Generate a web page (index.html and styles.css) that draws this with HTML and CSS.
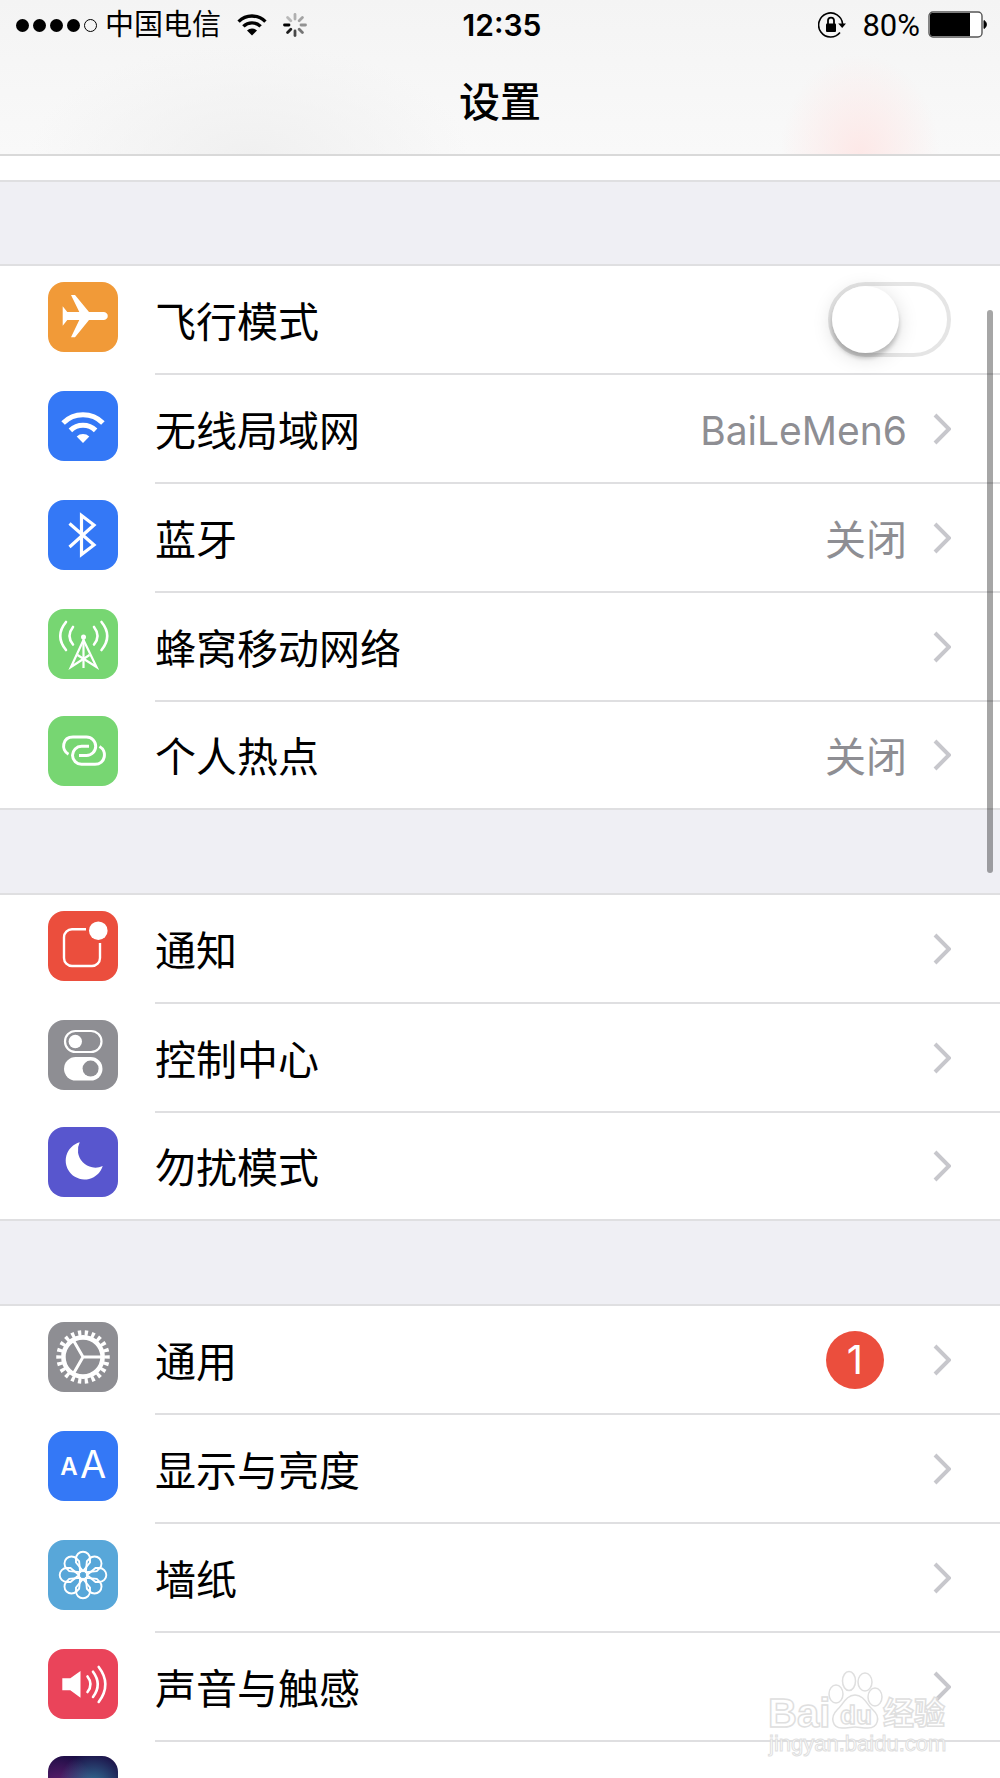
FILE: index.html
```
<!DOCTYPE html>
<html lang="zh-CN">
<head>
    <meta charset="UTF-8">
    <meta name="viewport" content="width=device-width, initial-scale=1.0">
    <title>设置</title>
    <link rel="stylesheet" href="styles.css">
</head>
<body>
    <svg class="sprite" aria-hidden="true">
        <symbol id="chevron" viewBox="0 0 18 32">
            <path d="M2 2 L16 16 L2 30" fill="none" stroke="currentColor" stroke-width="4"/>
        </symbol>
    </svg>

    <header class="header">
        <div class="status-bar">
            <div class="status-left">
                <div class="signal">
                    <span class="dot"></span>
                    <span class="dot"></span>
                    <span class="dot"></span>
                    <span class="dot"></span>
                    <span class="dot empty"></span>
                </div>
                <span class="carrier">中国电信</span>
                <svg class="wifi" width="30" height="22" viewBox="0 0 30 22">
                    <g fill="none" stroke="#000" stroke-width="3.4">
                        <path d="M1.6 7.6 A19 19 0 0 1 28.4 7.6"/>
                        <path d="M6.4 12.4 A12.2 12.2 0 0 1 23.6 12.4"/>
                    </g>
                    <path d="M15 21.5 L10 16.6 A7 7 0 0 1 20 16.6 Z"/>
                </svg>
                <svg width="24" height="24" viewBox="0 0 24 24" stroke="#000" stroke-width="2.8" stroke-linecap="round">
                    <path d="M12 1.5 V6" opacity=".28"/>
                    <path d="M19.4 4.6 L16.2 7.8" opacity=".33"/>
                    <path d="M22.5 12 H18" opacity=".4"/>
                    <path d="M19.4 19.4 L16.2 16.2" opacity=".52"/>
                    <path d="M12 22.5 V18" opacity=".7"/>
                    <path d="M4.6 19.4 L7.8 16.2" opacity=".88"/>
                    <path d="M1.5 12 H6"/>
                    <path d="M4.6 4.6 L7.8 7.8" opacity=".24"/>
                </svg>
            </div>
            <time class="clock">12:35</time>
            <div class="status-right">
                <svg width="28" height="28" viewBox="0 0 28 28">
                    <path d="M22 21.5 A12 12 0 1 1 24.6 13" fill="none" stroke="#000" stroke-width="1.6"/>
                    <path d="M20.2 12.5 H28 L24.2 17 Z"/>
                    <rect x="8" y="12.5" width="10" height="8.5" rx="1"/>
                    <path d="M10 13 V9.6 a3 3 0 0 1 6 0 V13" fill="none" stroke="#000" stroke-width="1.8"/>
                </svg>
                <span class="percent">80%</span>
                <svg width="60" height="28" viewBox="0 0 60 28">
                    <rect x="1" y="1" width="53" height="25" rx="4" fill="#fff" stroke="#555" stroke-width="1.4"/>
                    <path d="M4 2 H42 V25 H4 a2 2 0 0 1 -2 -2 V4 a2 2 0 0 1 2 -2 Z"/>
                    <path d="M56 9.5 a4.5 4.5 0 0 1 0 8 Z" stroke="#000"/>
                </svg>
            </div>
        </div>
        <h1>设置</h1>
    </header>

    <main class="settings">
        <div class="search-edge"></div>

        <div class="group">
            <div class="row">
                <svg class="icon orange" viewBox="0 0 70 70">
                    <path fill="#fff" d="M14.7 24.3 L19.3 30 H31.3 L23 13 H27 L41 30 H56 C61 30.5 61 37.5 56 38 H41 L27 55.3 H23 L31.3 38 H19.3 L14.7 43.7 Z"/>
                </svg>
                <div class="cell">
                    <label class="label" for="airplane">飞行模式</label>
                    <input class="switch" type="checkbox" id="airplane">
                </div>
            </div>
            <a class="row" href="#">
                <svg class="icon blue" viewBox="0 0 70 70">
                    <g fill="none" stroke="#fff" stroke-width="5">
                        <path d="M15.1 32 A28.2 28.2 0 0 1 54.9 32"/>
                        <path d="M22.4 39.4 A18 18 0 0 1 47.6 39.4"/>
                    </g>
                    <path fill="#fff" d="M35 52 L28.7 45.5 A9.5 9.5 0 0 1 41.3 45.5 Z"/>
                </svg>
                <div class="cell">
                    <span class="label">无线局域网</span>
                    <span class="value network">BaiLeMen6</span>
                    <svg class="chevron"><use href="#chevron"/></svg>
                </div>
            </a>
            <a class="row" href="#">
                <svg class="icon blue" viewBox="0 0 70 70">
                    <path fill="none" stroke="#fff" stroke-width="3.2" d="M21.5 23.5 L46 45 L33.5 54.5 V15.5 L46 25 L21.5 47"/>
                </svg>
                <div class="cell">
                    <span class="label">蓝牙</span>
                    <span class="value">关闭</span>
                    <svg class="chevron"><use href="#chevron"/></svg>
                </div>
            </a>
            <a class="row" href="#">
                <svg class="icon green" viewBox="0 0 70 70">
                    <circle cx="35.5" cy="28" r="2.5" fill="#fff"/>
                    <g fill="none" stroke="#fff" stroke-width="2.2">
                        <path d="M35.5 30 V59"/>
                        <path d="M35.5 31 L23 58 L41.5 46"/>
                        <path d="M35.5 31 L48.5 58 L29.5 46"/>
                    </g>
                    <g fill="none" stroke="#fff" stroke-width="2.6" stroke-linecap="round">
                        <path d="M25 18 Q18 27 25 35.5"/>
                        <path d="M18 13 Q6.5 27 18 41"/>
                        <path d="M46 18 Q53 27 46 35.5"/>
                        <path d="M53.5 13 Q65 27 53.5 41"/>
                    </g>
                </svg>
                <div class="cell">
                    <span class="label">蜂窝移动网络</span>
                    <svg class="chevron"><use href="#chevron"/></svg>
                </div>
            </a>
            <a class="row" href="#">
                <svg class="icon green" viewBox="0 0 70 70">
                    <g fill="none" stroke="#fff" stroke-width="3">
                        <path d="M20.5 38.3 C12.5 34 14.5 21 25 21 H38.5 A9.2 9.2 0 0 1 38.5 39.4 H31"/>
                        <path d="M41 30.3 H33.5 A9 9 0 0 0 33.5 48.3 H47 C57.5 48.3 59.5 35 51.5 30.5"/>
                    </g>
                </svg>
                <div class="cell">
                    <span class="label">个人热点</span>
                    <span class="value">关闭</span>
                    <svg class="chevron"><use href="#chevron"/></svg>
                </div>
            </a>
        </div>

        <div class="group">
            <a class="row" href="#">
                <svg class="icon red" viewBox="0 0 70 70">
                    <path fill="none" stroke="#fff" stroke-width="2.4" d="M38 18.2 H24 a8 8 0 0 0 -8 8 V47 a8 8 0 0 0 8 8 H44 a8 8 0 0 0 8 -8 V32"/>
                    <circle cx="50.3" cy="19.7" r="9.3" fill="#fff"/>
                </svg>
                <div class="cell">
                    <span class="label">通知</span>
                    <svg class="chevron"><use href="#chevron"/></svg>
                </div>
            </a>
            <a class="row" href="#">
                <svg class="icon gray" viewBox="0 0 70 70">
                    <rect x="17" y="11" width="36.5" height="21" rx="10.5" fill="none" stroke="#fff" stroke-width="2.2"/>
                    <circle cx="27.3" cy="21.5" r="6.7" fill="#fff"/>
                    <rect x="16" y="37" width="38.5" height="23.6" rx="11.8" fill="#fff"/>
                    <circle cx="42.6" cy="48.6" r="8" fill="#8e8e93"/>
                </svg>
                <div class="cell">
                    <span class="label">控制中心</span>
                    <svg class="chevron"><use href="#chevron"/></svg>
                </div>
            </a>
            <a class="row" href="#">
                <svg class="icon purple" viewBox="0 0 70 70">
                    <path fill="#fff" d="M31.7 15.3 A18.9 18.9 0 1 0 54.7 39 A17.5 17.5 0 0 1 31.7 15.3 Z"/>
                </svg>
                <div class="cell">
                    <span class="label">勿扰模式</span>
                    <svg class="chevron"><use href="#chevron"/></svg>
                </div>
            </a>
        </div>

        <div class="group">
            <a class="row" href="#">
                <svg class="icon gray" viewBox="0 0 70 70">
                    <g fill="none" stroke="#fff">
                        <circle cx="35" cy="35" r="24" stroke-width="5.5" pathLength="220" stroke-dasharray="4.8 5.2" stroke-dashoffset="2.4"/>
                        <circle cx="35" cy="35" r="19.6" stroke-width="4.6"/>
                        <path stroke-width="3" d="M35 35 H54 M35 35 L25.5 18.5 M35 35 L25.5 51.5"/>
                    </g>
                </svg>
                <div class="cell">
                    <span class="label">通用</span>
                    <span class="badge">1</span>
                    <svg class="chevron"><use href="#chevron"/></svg>
                </div>
            </a>
            <a class="row" href="#">
                <svg class="icon blue" viewBox="0 0 70 70">
                    <g class="letters" text-anchor="middle">
                        <text class="small-a" x="21" y="44">A</text>
                        <text class="big-a" x="45" y="47">A</text>
                    </g>
                </svg>
                <div class="cell">
                    <span class="label">显示与亮度</span>
                    <svg class="chevron"><use href="#chevron"/></svg>
                </div>
            </a>
            <a class="row" href="#">
                <svg class="icon sky" viewBox="0 0 70 70">
                    <defs>
                        <path id="petal" d="M35 31 L28 22.5 V18.7 a7 7 0 0 1 14 0 V22.5 Z"/>
                    </defs>
                    <g fill="none" stroke="#fff" stroke-width="1.9">
                        <circle cx="35" cy="35" r="4.2"/>
                        <use href="#petal"/>
                        <use href="#petal" transform="rotate(45 35 35)"/>
                        <use href="#petal" transform="rotate(90 35 35)"/>
                        <use href="#petal" transform="rotate(135 35 35)"/>
                        <use href="#petal" transform="rotate(180 35 35)"/>
                        <use href="#petal" transform="rotate(225 35 35)"/>
                        <use href="#petal" transform="rotate(270 35 35)"/>
                        <use href="#petal" transform="rotate(315 35 35)"/>
                    </g>
                </svg>
                <div class="cell">
                    <span class="label">墙纸</span>
                    <svg class="chevron"><use href="#chevron"/></svg>
                </div>
            </a>
            <a class="row" href="#">
                <svg class="icon pink" viewBox="0 0 70 70">
                    <path fill="#fff" d="M14.3 29.3 H22.3 L32.5 22 V48.7 L22.3 41.3 H14.3 Z"/>
                    <g fill="none" stroke="#fff" stroke-width="2.6" stroke-linecap="round">
                        <path d="M39.5 27.5 Q45.5 35.3 39.5 43"/>
                        <path d="M45 22.7 Q54.5 35.3 45 48"/>
                        <path d="M50.7 18 Q64 35.3 50.7 53"/>
                    </g>
                </svg>
                <div class="cell">
                    <span class="label">声音与触感</span>
                    <svg class="chevron"><use href="#chevron"/></svg>
                </div>
            </a>
            <a class="row" href="#">
                <span class="icon siri"></span>
                <div class="cell"></div>
            </a>
        </div>
    </main>

    <div class="scrollbar"></div>

    <svg class="watermark" width="184" height="90" viewBox="0 0 184 90">
        <g fill="#fff" stroke="#dcdcdc" stroke-width="1.5">
            <ellipse cx="70" cy="26" rx="7" ry="9"/>
            <ellipse cx="83" cy="13" rx="6.5" ry="9.5"/>
            <ellipse cx="99" cy="14" rx="7" ry="9"/>
            <ellipse cx="109" cy="29" rx="7" ry="9"/>
            <path d="M89 27 C98 27 101 37 107 42 C115 49 112 60 102 60 C96 60 93 59 89 59 C85 59 82 60 76 60 C66 60 64 49 71 42 C77 37 80 27 89 27 Z"/>
            <text class="wm-bai" x="2" y="59">Bai</text>
            <text class="wm-du" x="74" y="56">du</text>
            <text class="wm-cn" x="117" y="56">经验</text>
            <text class="wm-url" x="3" y="83">jingyan.baidu.com</text>
        </g>
    </svg>
</body>
</html>
```
FILE: styles.css
```
:root {
    --line-color: #dfdfe1;
    --page-color: #efeff4;
    --value-color: #8e8e93;
    --chevron-color: #c7c7cc;
}

* {
    margin: 0;
    padding: 0;
    box-sizing: border-box;
}

body {
    position: relative;
    height: 100vh;
    overflow: hidden;
    display: flex;
    flex-direction: column;
    background-color: var(--page-color);
    color: #000;
    font-family: Inter, "Noto Sans CJK SC", sans-serif;
}

a {
    color: inherit;
    text-decoration: none;
}

.sprite {
    display: none;
}

/* Header */
.header {
    flex-shrink: 0;
    height: 156px;
    border-bottom: 2px solid #d9d9d9;
    background:
        radial-gradient(ellipse 80px 100px at 86% 100%, #fde8e7, rgba(253, 232, 231, 0)),
        radial-gradient(ellipse 220px 110px at 25% 100%, #f0f0f0, rgba(240, 240, 240, 0)),
        linear-gradient(#f4f4f4, #f9f9f9);
}

.status-bar {
    display: grid;
    grid-template-columns: 1fr auto 1fr;
    align-items: center;
    height: 50px;
    padding: 0 12px 0 16px;
}

.status-left,
.status-right {
    display: flex;
    align-items: center;
}

.status-right {
    justify-content: flex-end;
}

.signal {
    display: flex;
    gap: 4px;
    margin-right: 8px;
}

.dot {
    width: 13px;
    height: 13px;
    border-radius: 50%;
    background-color: #000;
}

.dot.empty {
    background-color: transparent;
    border: 1px solid #000;
}

.carrier {
    font-size: 29px;
    line-height: 40px;
}

.wifi {
    margin: 0 16px;
}

.clock {
    font-size: 30px;
    font-weight: 600;
}

.percent {
    margin: 0 8px 0 16px;
    font-family: Roboto, sans-serif;
    font-size: 31px;
}

.header h1 {
    padding-top: 22px;
    font-size: 41px;
    font-weight: 500;
    line-height: 60px;
    text-align: center;
}

/* Settings list */
.settings {
    flex: 1;
    min-height: 0;
    overflow: hidden;
}

.search-edge {
    height: 26px;
    background-color: #fff;
    border-bottom: 2px solid var(--line-color);
}

.group {
    margin-top: 82px;
    background-color: #fff;
    border-top: 2px solid var(--line-color);
}

.row {
    display: flex;
    align-items: center;
    height: 109px;
    padding-left: 48px;
}

.group .row:last-child {
    height: 108px;
    border-bottom: 2px solid var(--line-color);
}

.group .row:last-child .cell {
    border-bottom: none;
}

.group + .group {
    margin-top: 83px;
}

.icon {
    flex-shrink: 0;
    width: 70px;
    height: 70px;
    margin-bottom: 8px;
    margin-right: 37px;
    border-radius: 16px;
}

.orange { background-color: #f19a38; }
.blue { background-color: #3478f6; }
.green { background-color: #77d672; }
.red { background-color: #eb4e3d; }
.gray { background-color: #8e8e93; }
.purple { background-color: #5856ce; }
.sky { background-color: #58a7d9; }
.pink { background-color: #ea445a; }

.siri {
    background:
        radial-gradient(circle at 65% 45%, rgba(60, 150, 180, 0.8), rgba(60, 150, 180, 0) 60%),
        radial-gradient(circle at 15% 50%, rgba(130, 40, 130, 0.8), rgba(130, 40, 130, 0) 55%),
        #1b0d45;
}

.cell {
    flex: 1;
    display: flex;
    align-items: center;
    height: 100%;
    padding-right: 49px;
    border-bottom: 2px solid var(--line-color);
}

.label,
.value {
    padding-top: 4px;
    font-size: 41px;
    line-height: 60px;
}

.label {
    flex: 1;
}

.value {
    color: var(--value-color);
}

.value.network {
    font-size: 39px;
}

.chevron {
    width: 18px;
    height: 32px;
    margin-left: 26px;
    color: var(--chevron-color);
}

.badge {
    width: 58px;
    height: 58px;
    margin-right: 23px;
    border-radius: 50%;
    background-color: #eb4e3d;
    color: #fff;
    font-size: 40px;
    line-height: 58px;
    text-align: center;
}

.switch {
    appearance: none;
    width: 123px;
    height: 75px;
    border: 4px solid #e5e5e5;
    border-radius: 38px;
    background-color: #fff;
    cursor: pointer;
}

.switch::before {
    content: "";
    display: block;
    width: 67px;
    height: 67px;
    border-radius: 50%;
    background-color: #fff;
    box-shadow: 0 5px 4px rgba(0, 0, 0, 0.2), 0 4px 20px rgba(0, 0, 0, 0.15);
}

.switch:checked {
    background-color: #4cd964;
    border-color: #4cd964;
}

.switch:checked::before {
    margin-left: auto;
}

.letters {
    fill: #fff;
}

.small-a {
    font-size: 24px;
    font-weight: 600;
}

.big-a {
    font-size: 38px;
    font-weight: 400;
}

/* Overlays */
.scrollbar {
    position: absolute;
    top: 310px;
    right: 7px;
    width: 6px;
    height: 563px;
    border-radius: 3px;
    background-color: rgba(0, 0, 0, 0.35);
}

.watermark {
    position: absolute;
    right: 50px;
    bottom: 20px;
    font-family: "Liberation Sans", "Noto Sans CJK SC", sans-serif;
    font-weight: 700;
    opacity: 0.9;
}

.wm-bai {
    font-size: 40px;
}

.wm-du {
    font-size: 26px;
}

.wm-cn {
    font-size: 31px;
}

.wm-url {
    font-size: 22px;
    font-weight: 400;
    stroke-width: 1px;
}
```
